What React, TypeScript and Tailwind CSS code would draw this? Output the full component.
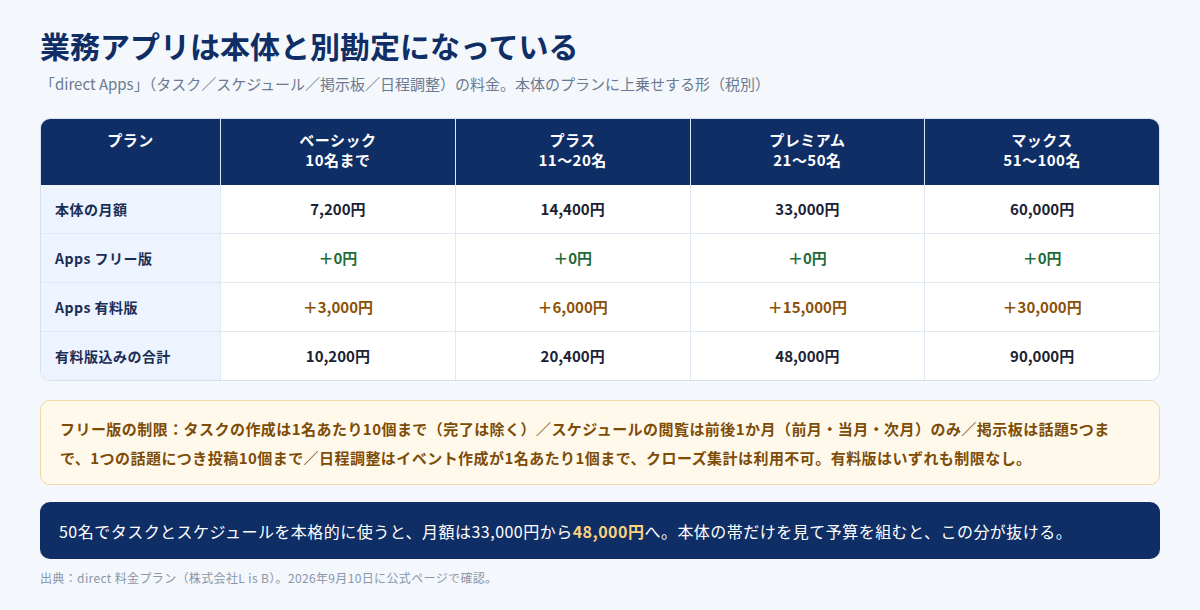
const font = { fontFamily: '"Noto Sans CJK JP", "Noto Sans", sans-serif' };

const plans = [
  { name: "ベーシック", range: "10名まで" },
  { name: "プラス", range: "11〜20名" },
  { name: "プレミアム", range: "21〜50名" },
  { name: "マックス", range: "51〜100名" },
];

type Row = { label: string; values: string[]; tone: "base" | "free" | "paid" };

const rows: Row[] = [
  { label: "本体の月額", values: ["7,200円", "14,400円", "33,000円", "60,000円"], tone: "base" },
  { label: "Apps フリー版", values: ["＋0円", "＋0円", "＋0円", "＋0円"], tone: "free" },
  { label: "Apps 有料版", values: ["＋3,000円", "＋6,000円", "＋15,000円", "＋30,000円"], tone: "paid" },
  { label: "有料版込みの合計", values: ["10,200円", "20,400円", "48,000円", "90,000円"], tone: "base" },
];

const toneClass = {
  base: "text-[#1b2233]",
  free: "text-[#1f6b3a]",
  paid: "text-[#8a5208]",
};

export default function App() {
  return (
    <div className="min-h-[610px] w-[1200px] bg-[#f4f7fc] px-10 pt-[25px]" style={font}>
      <h1 className="text-[30px] font-bold leading-[40px] text-[#0f2e66]">
        業務アプリは本体と別勘定になっている
      </h1>
      <p className="mt-[9px] text-[15px] leading-5 text-[#6b7a90]">
        「direct Apps」（タスク／スケジュール／掲示板／日程調整）の料金。本体のプランに上乗せする形（税別）
      </p>

      <div className="mt-[24px] overflow-hidden rounded-[10px] border border-[#d6e0ef] bg-white tracking-[0.03em]">
        <div className="grid grid-cols-[179px_repeat(4,1fr)] bg-[#0f2e66] text-[15px] font-bold leading-5 text-white">
          <div className="h-[66px] pt-[11px] text-center">プラン</div>
          {plans.map((p) => (
            <div key={p.name} className="h-[66px] border-l border-[#dfe6f2] pt-[11px] text-center">
              <div>{p.name}</div>
              <div>{p.range}</div>
            </div>
          ))}
        </div>
        {rows.map((r, i) => (
          <div
            key={r.label}
            className={`grid grid-cols-[179px_repeat(4,1fr)] ${i > 0 ? "border-t border-[#e1e8f3]" : ""}`}
          >
            <div className="flex h-[48px] items-center bg-[#edf3ff] pl-[14px] text-[14px] font-bold text-[#1a2d55]">
              {r.label}
            </div>
            {r.values.map((v, j) => (
              <div
                key={j}
                className={`flex h-[48px] items-center justify-center border-l border-[#e1e8f3] text-[15px] font-semibold tracking-normal ${toneClass[r.tone]}`}
              >
                {v}
              </div>
            ))}
          </div>
        ))}
      </div>

      <div className="mt-[19px] rounded-[10px] border border-[#efd9a6] bg-[#fff9ec] pt-[13px] pb-[12px] pl-[19px] pr-[30px] text-[15px] font-bold leading-[29px] tracking-[0.03em] text-[#7d4c07]">
        フリー版の制限：タスクの作成は1名あたり10個まで（完了は除く）／スケジュールの閲覧は前後1か月（前月・当月・次月）のみ／掲示板は話題5つまで、1つの話題につき投稿10個まで／日程調整はイベント作成が1名あたり1個まで、クローズ集計は利用不可。有料版はいずれも制限なし。
      </div>

      <div className="mt-[17px] flex h-[57px] items-center rounded-[10px] bg-[#0f2e66] px-[19px] text-[16px] tracking-[0.03em] text-white">
        <span>
          50名でタスクとスケジュールを本格的に使うと、月額は33,000円から
          <span className="font-bold text-[#fcd27d]">48,000円</span>
          へ。本体の帯だけを見て予算を組むと、この分が抜ける。
        </span>
      </div>

      <p className="mt-[9px] text-[12px] leading-5 tracking-[0.03em] text-[#8a96a8]">
        出典：direct 料金プラン（株式会社L is B）。2026年9月10日に公式ページで確認。
      </p>
    </div>
  );
}
